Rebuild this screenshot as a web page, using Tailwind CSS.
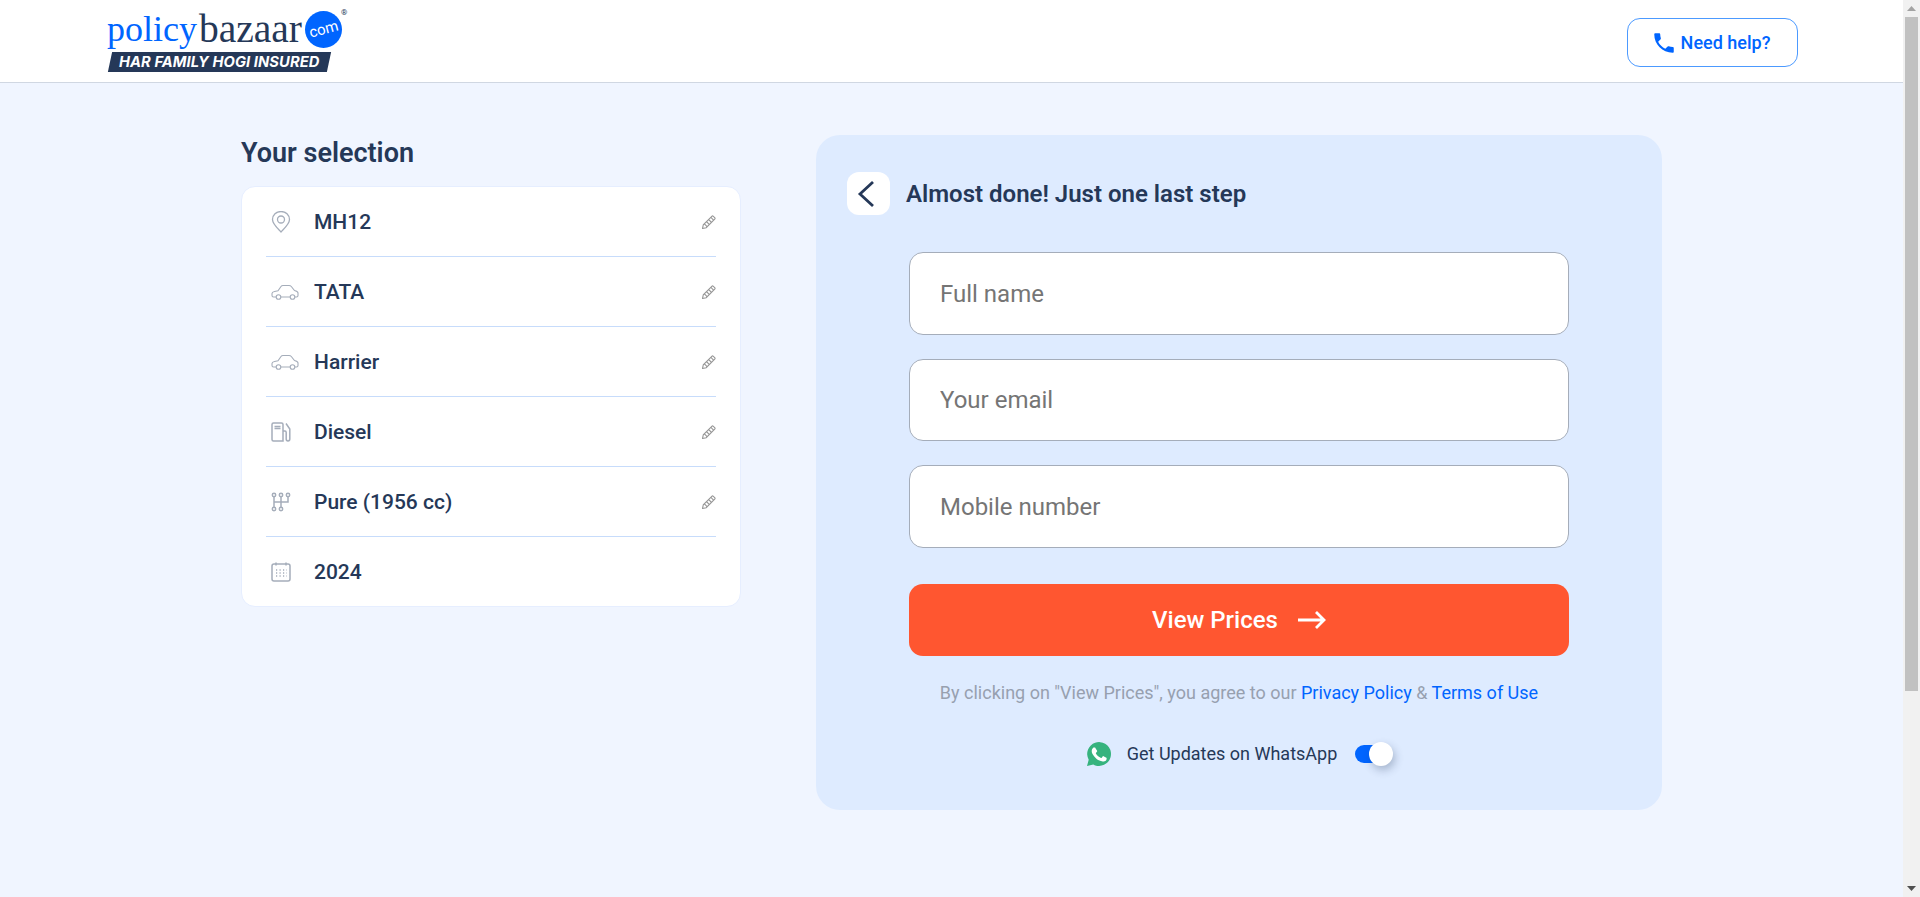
<!DOCTYPE html>
<html lang="en">

<head>
    <meta charset="UTF-8">
    <meta name="viewport" content="width=device-width, initial-scale=1.0">
    <title>Policybazaar - Car Insurance</title>
    <script src="https://cdn.jsdelivr.net/npm/@tailwindcss/browser@4"></script>
</head>

<body class="w-screen h-screen overflow-hidden flex bg-[#f0f5ff] font-['Roboto',sans-serif] text-[#253858]">
    <div class="flex-1 flex flex-col min-w-0">
        <!-- header -->
        <header class="h-[83px] bg-white border-b border-[#d0d7e2] flex justify-between pl-[107px] pr-[105px]">
            <div class="w-[245px] pt-[7px]">
                <div class="flex items-start h-[45px]">
                    <span class="font-['Liberation_Serif',serif] text-[36px] leading-[45px] text-[#0065ff]">policy</span>
                    <span class="font-['Liberation_Serif',serif] text-[39.500px] leading-[45px] ml-[2px] text-[#253858]">bazaar</span>
                    <div class="w-[37px] h-[37px] mt-[4px] ml-[3px] rounded-full bg-[#0065ff] flex items-center justify-center shrink-0">
                        <span class="text-white text-[15px] leading-none -rotate-[15deg]">com</span>
                    </div>
                    <span class="text-[8px] leading-none mt-[2px] -ml-[1px] text-[#253858]">®</span>
                </div>
                <div class="w-[219px] h-[20px] ml-[3px] bg-[#253858] -skew-x-12 flex items-center justify-center">
                    <span class="skew-x-12 font-['Inter',sans-serif] italic font-bold text-[14.700px] leading-none tracking-[0.1px] text-white whitespace-nowrap">HAR FAMILY HOGI INSURED</span>
                </div>
            </div>
            <button class="w-[171px] h-[49px] mt-[18px] pr-[4px] rounded-[13px] border border-[#4c9aff] bg-white flex items-center justify-center gap-[4px] text-[18px] font-medium text-[#0065ff]">
                <svg class="w-[26px] h-[26px]" viewBox="0 0 24 24" fill="#0065ff"><path d="M6.6 10.8c1.4 2.8 3.8 5.1 6.6 6.6l2.2-2.2c.3-.3.7-.4 1-.2 1.1.4 2.3.6 3.6.6.6 0 1 .4 1 1V20c0 .6-.4 1-1 1C10.6 21 3 13.4 3 4c0-.6.5-1 1-1h3.500c.6 0 1 .4 1 1 0 1.300.2 2.500.6 3.600.1.300 0 .7-.2 1z"/></svg>
                Need help?
            </button>
        </header>

        <main class="flex pl-[241px] pt-[52px] gap-[75px]">
            <!-- selection column -->
            <section class="w-[500px] pt-[4px]">
                <h2 class="h-[47px] text-[27px] leading-[28px] font-semibold">Your selection</h2>
                <div class="h-[421px] bg-white border border-[#e6eeff] rounded-[14px] px-[24px] flex flex-col">
                    <div class="h-[70px] shrink-0 border-b border-[#c7dcfb] flex items-center text-[21px] font-medium">
                        <svg class="w-[20px] h-[22px] ml-[5px] mr-[23px] shrink-0" viewBox="0 0 20 22" fill="none" stroke="#a5adba" stroke-width="1.300"><path d="M10 21c-1-1.500-8.500-7.500-8.500-12.500a8.500 8 0 0 1 17 0C18.500 13.500 11 19.500 10 21z"/><circle cx="10" cy="8.500" r="3.500"/></svg>
                        <span class="flex-1 mt-[2px]">MH12</span>
                        <svg class="w-[14px] h-[14px] shrink-0" viewBox="0.500 0.500 13 13" fill="none" stroke="#969696" stroke-width="1"><path d="M1 13l.7-3.400 7.900-7.900a1 1 0 0 1 1.400 0l1.300 1.300a1 1 0 0 1 0 1.400l-7.900 7.900zM3 9l2 2M5 7l2 2M7 5l2 2M9 3l2 2"/></svg>
                    </div>
                    <div class="h-[70px] shrink-0 border-b border-[#c7dcfb] flex items-center text-[21px] font-medium">
                        <svg class="w-[28px] h-[16px] ml-[5px] mr-[15px] shrink-0" viewBox="0 0 28 16" fill="none" stroke="#a5adba" stroke-width="1.100"><path d="M5 13H2.500C1.500 13 1 12.300 1 11.500V9.500C1 8.500 2 7.800 3.500 7.500L7 6.800 10 2.500C10.500 1.800 11 1.500 12 1.500h6c1 0 1.700.3 2.300 1l3.200 4c2 .5 3.500 1 3.500 2.500v2.500c0 1-.5 1.500-1.500 1.500H24M10 13h9"/><circle cx="7.500" cy="13" r="2.300"/><circle cx="21.500" cy="13" r="2.300"/></svg>
                        <span class="flex-1 mt-[2px]">TATA</span>
                        <svg class="w-[14px] h-[14px] shrink-0" viewBox="0.500 0.500 13 13" fill="none" stroke="#969696" stroke-width="1"><path d="M1 13l.7-3.400 7.900-7.900a1 1 0 0 1 1.400 0l1.300 1.300a1 1 0 0 1 0 1.400l-7.900 7.900zM3 9l2 2M5 7l2 2M7 5l2 2M9 3l2 2"/></svg>
                    </div>
                    <div class="h-[70px] shrink-0 border-b border-[#c7dcfb] flex items-center text-[21px] font-medium">
                        <svg class="w-[28px] h-[16px] ml-[5px] mr-[15px] shrink-0" viewBox="0 0 28 16" fill="none" stroke="#a5adba" stroke-width="1.100"><path d="M5 13H2.500C1.500 13 1 12.300 1 11.500V9.500C1 8.500 2 7.800 3.500 7.500L7 6.800 10 2.500C10.500 1.800 11 1.500 12 1.500h6c1 0 1.700.3 2.300 1l3.200 4c2 .5 3.500 1 3.500 2.500v2.500c0 1-.5 1.500-1.500 1.500H24M10 13h9"/><circle cx="7.500" cy="13" r="2.300"/><circle cx="21.500" cy="13" r="2.300"/></svg>
                        <span class="flex-1 mt-[2px]">Harrier</span>
                        <svg class="w-[14px] h-[14px] shrink-0" viewBox="0.500 0.500 13 13" fill="none" stroke="#969696" stroke-width="1"><path d="M1 13l.7-3.400 7.900-7.900a1 1 0 0 1 1.400 0l1.300 1.300a1 1 0 0 1 0 1.400l-7.900 7.900zM3 9l2 2M5 7l2 2M7 5l2 2M9 3l2 2"/></svg>
                    </div>
                    <div class="h-[70px] shrink-0 border-b border-[#c7dcfb] flex items-center text-[21px] font-medium">
                        <svg class="w-[20px] h-[20px] ml-[5px] mr-[23px] shrink-0" viewBox="0 0 20 20" fill="none" stroke="#a5adba" stroke-width="1.500"><path d="M1 2.500C1 1.500 1.500 1 2.500 1h8c1 0 1.500.5 1.500 1.500V19H2.500C1.500 19 1 18.500 1 17.500zM3.500 4.500h6M3.500 6.500h6M12 9h2c1 0 1.200.7 1.200 1.500V17c0 2.500 3.600 2.500 3.600 0V7L15 1.500"/></svg>
                        <span class="flex-1 mt-[2px]">Diesel</span>
                        <svg class="w-[14px] h-[14px] shrink-0" viewBox="0.500 0.500 13 13" fill="none" stroke="#969696" stroke-width="1"><path d="M1 13l.7-3.400 7.900-7.900a1 1 0 0 1 1.400 0l1.300 1.300a1 1 0 0 1 0 1.400l-7.900 7.900zM3 9l2 2M5 7l2 2M7 5l2 2M9 3l2 2"/></svg>
                    </div>
                    <div class="h-[70px] shrink-0 border-b border-[#c7dcfb] flex items-center text-[21px] font-medium">
                        <svg class="w-[20px] h-[20px] ml-[5px] mr-[23px] shrink-0" viewBox="0 0 20 20" fill="none" stroke="#a5adba" stroke-width="1.500"><circle cx="3" cy="3" r="1.700"/><circle cx="10" cy="3" r="1.700"/><circle cx="17" cy="3" r="1.700"/><circle cx="3" cy="17" r="1.700"/><circle cx="10" cy="17" r="1.700"/><path d="M3 4.700v10.600M10 4.700v10.600M17 4.700V10H3"/></svg>
                        <span class="flex-1 mt-[2px]">Pure (1956 cc)</span>
                        <svg class="w-[14px] h-[14px] shrink-0" viewBox="0.500 0.500 13 13" fill="none" stroke="#969696" stroke-width="1"><path d="M1 13l.7-3.400 7.900-7.900a1 1 0 0 1 1.400 0l1.300 1.300a1 1 0 0 1 0 1.400l-7.900 7.900zM3 9l2 2M5 7l2 2M7 5l2 2M9 3l2 2"/></svg>
                    </div>
                    <div class="h-[69px] shrink-0 pt-[1px] flex items-center text-[21px] font-medium">
                        <svg class="w-[20px] h-[20px] ml-[5px] mr-[23px] shrink-0" viewBox="0 0 20 20" fill="none" stroke="#a5adba" stroke-width="1.500"><rect x="1" y="2" width="18" height="17" rx="2"/><path d="M5 .5v3M15 .5v3"/><path stroke-dasharray="1.200 2.300" d="M5 8h11M5 11h11M5 14h11"/></svg>
                        <span class="flex-1 mt-[2px]">2024</span>
                    </div>
                </div>
            </section>

            <!-- form panel -->
            <section class="w-[846px] h-[675px] bg-[#deebff] rounded-[24px] pt-[37px]">
                <div class="flex items-center pl-[31px] gap-[16px]">
                    <button class="w-[43px] h-[43px] bg-white rounded-[12px] flex items-center justify-center">
                        <svg class="w-[19px] h-[28px] mr-[5px]" viewBox="0 0 19 28" fill="none" stroke="#253858" stroke-width="2.800"><path d="M16 2L3 14l13 12"/></svg>
                    </button>
                    <h3 class="text-[24px] font-semibold">Almost done! Just one last step</h3>
                </div>
                <form class="mt-[37px] px-[93px] flex flex-col">
                    <input type="text" placeholder="Full name" class="h-[83px] w-full bg-white border border-[#a5adba] rounded-[14px] px-[30px] text-[24px] placeholder:text-[#757575]">
                    <input type="text" placeholder="Your email" class="mt-[24px] h-[82px] w-full bg-white border border-[#a5adba] rounded-[14px] px-[30px] text-[24px] placeholder:text-[#757575]">
                    <input type="text" placeholder="Mobile number" class="mt-[24px] h-[83px] w-full bg-white border border-[#a5adba] rounded-[14px] px-[30px] text-[24px] placeholder:text-[#757575]">
                    <button type="button" class="mt-[36px] h-[72px] bg-[#ff5630] rounded-[14px] flex items-center justify-center gap-[20px] text-white text-[24px] font-medium">
                        View Prices
                        <svg class="w-[28px] h-[20px]" viewBox="0 0 28 20" fill="none" stroke="#fff" stroke-width="2.800"><path d="M0 10h26M18 2l8 8-8 8"/></svg>
                    </button>
                    <p class="mt-[25px] h-[24px] text-center text-[18px] leading-[24px] text-[#97a0af]">By clicking on "View Prices", you agree to our <a class="text-[#0065ff]">Privacy Policy</a> &amp; <a class="text-[#0065ff]">Terms of Use</a></p>
                    <div class="mt-[35px] pl-[2px] flex items-center justify-center">
                        <svg class="w-[24px] h-[24px] shrink-0" viewBox="0 0 24 24"><path fill="#36b37e" d="M0 24l1.700-6.200A11.900 11.900 0 1 1 12 23.900c-2 0-4-.5-5.700-1.500z"/><path fill="#fff" d="M8.500 6.200c-.3-.6-.5-.6-.8-.6h-.7c-.3 0-.7.1-1 .5-.4.400-1.300 1.300-1.300 3.100s1.300 3.600 1.500 3.800c.2.300 2.600 4.100 6.300 5.600 3.100 1.200 3.700 1 4.400.9.700-.1 2.200-.9 2.500-1.800.3-.9.300-1.600.2-1.800-.1-.2-.3-.3-.7-.5l-2.400-1.200c-.3-.1-.6-.2-.8.2-.2.400-.9 1.200-1.100 1.400-.2.200-.4.300-.8.100-.4-.2-1.500-.6-2.900-1.800-1.100-1-1.800-2.200-2-2.500-.2-.4 0-.6.200-.8l.6-.7c.2-.2.200-.4.400-.6.100-.2.100-.5 0-.7z"/></svg>
                        <span class="ml-[16px] text-[18px]">Get Updates on WhatsApp</span>
                        <div class="ml-[18px] w-[38px] h-[24px] flex items-center relative">
                            <div class="w-[30px] h-[18px] rounded-full bg-[#0065ff]"></div>
                            <div class="absolute right-0 top-0 w-[24px] h-[24px] rounded-full bg-white shadow-[2px_4px_8px_rgba(37,56,88,0.3)]"></div>
                        </div>
                    </div>
                </form>
            </section>
        </main>
    </div>

    <!-- scrollbar -->
    <div class="w-[17px] h-full bg-[#f1f1f1] flex flex-col items-center shrink-0">
        <div class="h-[17px] flex items-center justify-center">
            <svg class="w-[9px] h-[5px]" viewBox="0 0 9 5" fill="#a3a3a3"><path d="M4.500 0L9 5H0z"/></svg>
        </div>
        <div class="w-[13px] h-[674px] bg-[#c1c1c1]"></div>
        <div class="flex-1"></div>
        <div class="h-[17px] flex items-center justify-center">
            <svg class="w-[9px] h-[5px]" viewBox="0 0 9 5" fill="#505050"><path d="M0 0h9L4.500 5z"/></svg>
        </div>
    </div>
</body>

</html>
